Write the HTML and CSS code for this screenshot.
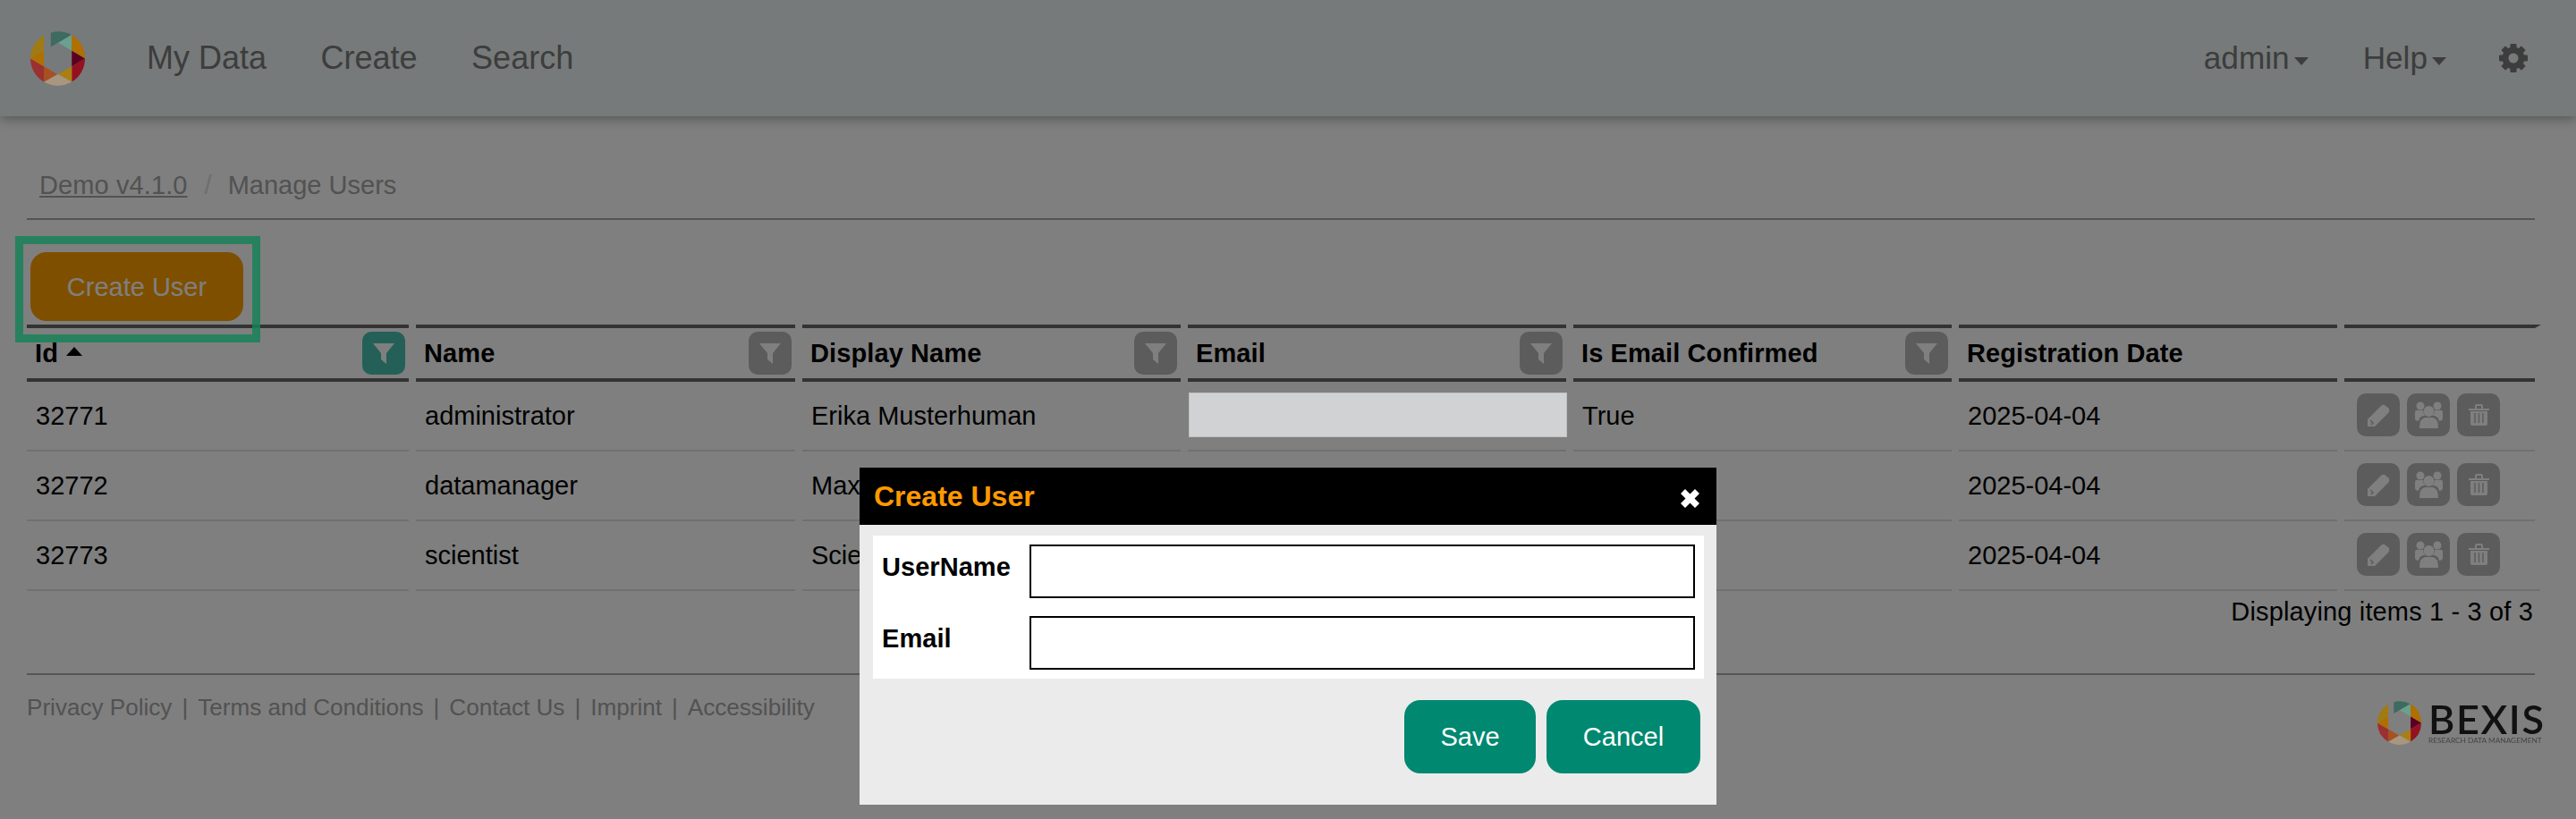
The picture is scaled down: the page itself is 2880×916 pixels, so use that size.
FILE: index.html
```html
<!DOCTYPE html>
<html lang="en">
<head>
<meta charset="utf-8">
<title>Manage Users</title>
<link rel="stylesheet" href="styles.css">
</head>
<body>
<svg class="defs" width="0" height="0" aria-hidden="true">
  <defs>
    <g id="bexis-mark">
      <path fill="#3d6b60" d="M37.4 2.7A50 50 0 0 1 75 6.6L37.4 28.6Z"/>
      <path fill="#6aa08f" d="M75.8 6.6V35.7L51 20.9Z"/>
      <path fill="#b06f00" d="M75.8 6.6A50 50 0 0 1 100 50L75.8 35.7Z"/>
      <path fill="#5a0020" d="M75.8 35.7L100 50L75.8 64.3Z"/>
      <path fill="#951020" d="M100 50A50 50 0 0 1 75.8 92.8V64.3Z"/>
      <path fill="#a98010" d="M75.8 64.3V92.8L51 78.6Z"/>
      <path fill="#a99680" d="M75.8 92.8A50 50 0 0 1 24.7 92.8L51 78.6Z"/>
      <path fill="#a85020" d="M24.7 92.8V64.3L49 78.6Z"/>
      <path fill="#9b3030" d="M0 50L24.7 64.3V92.8A50 50 0 0 1 0 50Z"/>
      <path fill="#b06f00" d="M24.7 35.7V64.3L0 50Z"/>
      <path fill="#a07b14" d="M24.7 7.2V35.7L0 50A50 50 0 0 1 24.7 7.2Z"/>
    </g>
    <path id="i-filter" d="M0 0H24L15 11V23L9 18V11Z"/>
    <g id="i-pencil">
      <path d="M0 25V17L15 2Q17 0 19 1L24 5Q25 8 23 10L8 25Z"/>
      <path class="notch" d="M3 18L6 21L4 23L6 21"/>
    </g>
    <g id="i-group">
      <circle cx="6" cy="5" r="4.5"/>
      <circle cx="25" cy="5" r="4.5"/>
      <path d="M0 12Q0 9 4 10H27Q31 9 31 12V19Q31 22 26 22H5Q0 22 0 19Z"/>
      <circle class="cut" cx="15.5" cy="11" r="6.5"/>
      <path class="cut" d="M4 30V23Q4 17 10 16H21Q27 17 27 23V30Z"/>
      <path d="M5 30Q5 19 11 18H20Q26 19 26 30Z"/>
      <circle cx="15.5" cy="11" r="6"/>
    </g>
    <g id="i-trash">
      <path d="M0 5H7V2Q7 0 9 0H14Q16 0 16 2V5H23V7H0ZM9 2V5H14V2Z"/>
      <path d="M2 8H21V22Q21 24 19 24H4Q2 24 2 22Z"/>
      <path class="notch" d="M7 10V21M11.500 10V21M16 10V21"/>
    </g>
  </defs>
</svg>

<header class="topbar">
  <svg class="logo-top" viewBox="0 0 100 100" aria-label="BEXIS logo"><use href="#bexis-mark"/></svg>
  <nav class="nav-main">
    <a class="nav-link">My Data</a>
    <a class="nav-link">Create</a>
    <a class="nav-link">Search</a>
  </nav>
  <nav class="nav-right">
    <a class="nav-link nav-drop">admin<span class="caret"></span></a>
    <a class="nav-link nav-drop">Help<span class="caret"></span></a>
    <svg class="gear" viewBox="-16 -16 32 32" aria-label="Settings">
      <circle class="gear-ring" r="9"/>
      <rect class="gear-tooth" x="-3.500" y="-16" width="7" height="7" rx="1"/>
      <rect class="gear-tooth" x="-3.500" y="-16" width="7" height="7" rx="1" transform="rotate(45)"/>
      <rect class="gear-tooth" x="-3.500" y="-16" width="7" height="7" rx="1" transform="rotate(90)"/>
      <rect class="gear-tooth" x="-3.500" y="-16" width="7" height="7" rx="1" transform="rotate(135)"/>
      <rect class="gear-tooth" x="-3.500" y="-16" width="7" height="7" rx="1" transform="rotate(180)"/>
      <rect class="gear-tooth" x="-3.500" y="-16" width="7" height="7" rx="1" transform="rotate(225)"/>
      <rect class="gear-tooth" x="-3.500" y="-16" width="7" height="7" rx="1" transform="rotate(270)"/>
      <rect class="gear-tooth" x="-3.500" y="-16" width="7" height="7" rx="1" transform="rotate(315)"/>
    </svg>
  </nav>
</header>

<main class="content">
  <div class="breadcrumb">
    <a class="crumb-link">Demo v4.1.0</a>
    <span class="crumb-sep">/</span>
    <span class="crumb-current">Manage Users</span>
  </div>

  <div class="toolbar">
    <button class="btn-create" type="button">Create User</button>
  </div>

  <div class="grid">
    <div class="th"><span class="th-label">Id<span class="sort-up"></span></span><span class="filter filter-active"><svg class="ic-filter" viewBox="0 0 24 23"><use href="#i-filter"/></svg></span></div>
    <div class="th"><span class="th-label">Name</span><span class="filter"><svg class="ic-filter" viewBox="0 0 24 23"><use href="#i-filter"/></svg></span></div>
    <div class="th"><span class="th-label">Display Name</span><span class="filter"><svg class="ic-filter" viewBox="0 0 24 23"><use href="#i-filter"/></svg></span></div>
    <div class="th"><span class="th-label">Email</span><span class="filter"><svg class="ic-filter" viewBox="0 0 24 23"><use href="#i-filter"/></svg></span></div>
    <div class="th"><span class="th-label">Is Email Confirmed</span><span class="filter"><svg class="ic-filter" viewBox="0 0 24 23"><use href="#i-filter"/></svg></span></div>
    <div class="th"><span class="th-label">Registration Date</span></div>
    <div class="th th-end"></div>

    <div class="td">32771</div>
    <div class="td">administrator</div>
    <div class="td">Erika Musterhuman</div>
    <div class="td"><span class="redacted"></span></div>
    <div class="td">True</div>
    <div class="td">2025-04-04</div>
    <div class="td td-actions">
      <span class="act"><svg class="ic-pencil" viewBox="0 0 25 25"><use href="#i-pencil"/></svg></span>
      <span class="act"><svg class="ic-group" viewBox="0 0 31 30"><use href="#i-group"/></svg></span>
      <span class="act"><svg class="ic-trash" viewBox="0 0 23 24"><use href="#i-trash"/></svg></span>
    </div>

    <div class="td">32772</div>
    <div class="td">datamanager</div>
    <div class="td">Max Musterhuman</div>
    <div class="td"></div>
    <div class="td">True</div>
    <div class="td">2025-04-04</div>
    <div class="td td-actions">
      <span class="act"><svg class="ic-pencil" viewBox="0 0 25 25"><use href="#i-pencil"/></svg></span>
      <span class="act"><svg class="ic-group" viewBox="0 0 31 30"><use href="#i-group"/></svg></span>
      <span class="act"><svg class="ic-trash" viewBox="0 0 23 24"><use href="#i-trash"/></svg></span>
    </div>

    <div class="td">32773</div>
    <div class="td">scientist</div>
    <div class="td">Scientist Musterhuman</div>
    <div class="td"></div>
    <div class="td">True</div>
    <div class="td">2025-04-04</div>
    <div class="td td-actions td-end">
      <span class="act"><svg class="ic-pencil" viewBox="0 0 25 25"><use href="#i-pencil"/></svg></span>
      <span class="act"><svg class="ic-group" viewBox="0 0 31 30"><use href="#i-group"/></svg></span>
      <span class="act"><svg class="ic-trash" viewBox="0 0 23 24"><use href="#i-trash"/></svg></span>
    </div>
  </div>

  <div class="pager">Displaying items 1 - 3 of 3</div>

  <footer class="footer">
    <div class="footer-links">
      <a>Privacy Policy</a><span class="pipe">|</span><a>Terms and Conditions</a><span class="pipe">|</span><a>Contact Us</a><span class="pipe">|</span><a>Imprint</a><span class="pipe">|</span><a>Accessibility</a>
    </div>
    <div class="brand">
      <svg class="brand-mark" viewBox="0 0 100 100" aria-hidden="true"><use href="#bexis-mark"/></svg>
      <div class="brand-text">
        <div class="brand-name">BEXIS</div>
        <div class="brand-tag">RESEARCH DATA MANAGEMENT</div>
      </div>
    </div>
  </footer>
</main>

<div class="overlay"></div>
<div class="highlight"></div>

<div class="modal" role="dialog" aria-label="Create User">
  <div class="modal-title">
    <span>Create User</span>
    <svg class="modal-close" viewBox="0 0 21 21" aria-label="Close"><path d="M5 0L10.500 5.500L16 0L21 5L15.500 10.500L21 16L16 21L10.500 15.500L5 21L0 16L5.500 10.500L0 5Z"/></svg>
  </div>
  <div class="modal-body">
    <div class="form-panel">
      <div class="form-row">
        <label class="form-label">UserName</label>
        <input class="form-input" type="text">
      </div>
      <div class="form-row">
        <label class="form-label">Email</label>
        <input class="form-input" type="text">
      </div>
    </div>
    <div class="modal-actions">
      <button class="btn-modal btn-save" type="button">Save</button>
      <button class="btn-modal btn-cancel" type="button">Cancel</button>
    </div>
  </div>
</div>
</body>
</html>
```
FILE: styles.css
```css
* { box-sizing: border-box; }
html, body { margin: 0; padding: 0; height: 916px; overflow: hidden; }
body {
  font-family: "Liberation Sans", Arial, sans-serif;
  font-size: 29px;
  color: #000;
  background: #fff;
}
.defs { position: absolute; }

/* top bar */
.topbar {
  height: 130px;
  display: flex;
  align-items: center;
  padding: 0 54px 0 34px;
  background: #ecf4f4;
  box-shadow: 0 4px 12px rgba(0, 0, 0, .3);
}
.logo-top { width: 61px; height: 61px; position: relative; z-index: 15; }
.nav-main { display: flex; gap: 60.5px; margin-left: 69px; }
.nav-right { display: flex; align-items: center; margin-left: auto; }
.nav-link { font-size: 36px; line-height: 44px; color: #7a7a7a; }
.nav-drop { display: flex; align-items: center; margin-right: 61px; font-size: 35.2px; }
.nav-drop + .gear { margin-left: -2px; }
.caret {
  width: 0; height: 0;
  margin: 6px 0 0 5px;
  border-left: 8px solid transparent;
  border-right: 8px solid transparent;
  border-top: 9px solid #7a7a7a;
}
.gear { width: 32px; height: 32px; }
.gear-ring { fill: none; stroke: #7a7a7a; stroke-width: 7; }
.gear-tooth { fill: #7a7a7a; }

/* content */
.content { padding: 0 46px 0 30px; }
.breadcrumb {
  height: 116px;
  padding: 60px 0 0 14px;
  line-height: 34px;
  border-bottom: 2px solid #aaa;
  color: #a4a4a4;
}
.crumb-link { color: #a4a4a4; text-decoration: underline; letter-spacing: .1px; }
.crumb-sep { margin: 0 10px 0 11px; color: #ddd; }
.toolbar { padding: 36px 0 4px 4px; }
.btn-create {
  display: block;
  width: 238px;
  height: 77px;
  padding: 2px 0 0;
  border: 0;
  border-radius: 18px;
  background: #ff9e00;
  color: #fff;
  font: inherit;
}

/* table */
.grid {
  display: grid;
  grid-template-columns: 427px 424px 423px 423px 423px 423px 213px;
  column-gap: 8px;
}
.th {
  position: relative;
  height: 64px;
  border-top: 4px solid #666;
  border-bottom: 4px solid #666;
  display: flex;
  align-items: center;
  justify-content: space-between;
  padding: 0 4px 0 9px;
}
.th-end::before {
  content: "";
  position: absolute;
  top: -4px; right: -7px;
  width: 7px; height: 4px;
  background: #666;
  clip-path: polygon(0 0, 100% 0, 0 100%);
}
.th-label { font-weight: 700; display: inline-flex; align-items: center; letter-spacing: .1px; }
.sort-up {
  width: 0; height: 0;
  margin: -4px 0 0 9px;
  border-left: 9px solid transparent;
  border-right: 9px solid transparent;
  border-bottom: 10px solid #000;
}
.filter {
  width: 48px; height: 48px;
  border-radius: 10px;
  background: #b8b8b8;
  display: flex;
  align-items: center;
  justify-content: center;
}
.filter-active { background: #48c0b0; }
.ic-filter { width: 24px; height: 23px; fill: #fff; }
.td {
  position: relative;
  height: 78px;
  padding: 0 10px 0 10px;
  display: flex;
  align-items: center;
  border-bottom: 2px solid #e0e0e0;
}
.td-end::after {
  content: "";
  position: absolute;
  bottom: -2px; right: -6px;
  width: 6px; height: 2px;
  background: #e0e0e0;
}
.redacted {
  position: absolute;
  z-index: 15;
  left: 1px; top: 12px;
  width: 423px; height: 50px;
  background: #d1d2d4;
  border: 1px solid #c0c0c2;
}
.td-actions { gap: 8px; padding: 0 10px 2px 14px; }
.act {
  width: 48px; height: 48px;
  border-radius: 10px;
  background: #b8b8b8;
  display: flex;
  align-items: center;
  justify-content: center;
  fill: #fff;
}
.ic-pencil { width: 25px; height: 25px; }
.ic-group { width: 31px; height: 30px; }
.ic-trash { width: 23px; height: 24px; }
.notch { fill: none; stroke: #b8b8b8; stroke-width: 1.500; }
.cut { fill: #b8b8b8; }

.pager { text-align: right; padding: 6px 2px 0 0; line-height: 34px; letter-spacing: .15px; }

/* footer */
.footer {
  margin-top: 52px;
  border-top: 2px solid #aaa;
  padding-top: 21px;
  display: flex;
  justify-content: space-between;
  align-items: flex-start;
}
.footer-links { font-size: 26.1px; line-height: 30px; color: #a4a4a4; }
.pipe { padding: 0 11px; }
.brand {
  position: relative;
  z-index: 15;
  display: flex;
  gap: 8px;
  margin: 8px -8px 0 0;
}
.brand-mark { width: 49px; height: 49px; }
.brand-text { width: 127px; padding-top: 1px; }
.brand-name {
  font-family: Lato, sans-serif;
  font-size: 45px;
  font-weight: 600;
  line-height: 38px;
  letter-spacing: 1.600px;
  color: #111;
}
.brand-tag {
  font-family: Lato, sans-serif;
  font-size: 8.300px;
  line-height: 8px;
  margin-top: 1px;
  white-space: nowrap;
  color: #444;
}

/* dimming layer, annotation */
.overlay {
  position: fixed;
  inset: 0;
  z-index: 10;
  background: rgba(0, 0, 0, .5);
}
.highlight {
  position: fixed;
  z-index: 20;
  left: 17px; top: 264px;
  width: 274px; height: 119px;
  border: 9px solid rgba(24, 129, 89, .85);
}

/* modal */
.modal {
  position: fixed;
  z-index: 20;
  left: 961px; top: 523px;
  width: 958px; height: 377px;
  background: #ebebeb;
}
.modal-title {
  height: 64px;
  background: #000;
  color: #ff9900;
  font-size: 32px;
  font-weight: 700;
  display: flex;
  align-items: center;
  justify-content: space-between;
  padding: 0 19px 0 16px;
}
.modal-close { width: 21px; height: 21px; fill: #fff; margin-top: 5px; }
.modal-body { padding: 12px 18px 0 15px; }
.form-panel {
  margin-right: -4px;
  height: 160px;
  background: #fff;
  padding: 10px 10px 10px 10px;
  display: flex;
  flex-direction: column;
  gap: 20px;
}
.form-row { display: flex; }
.form-label { width: 165px; flex: none; font-weight: 700; padding-top: 8px; line-height: 34px; letter-spacing: .05px; }
.form-input {
  flex: 1;
  min-width: 0;
  height: 60px;
  border: 2px solid #000;
  background: #fff;
  border-radius: 0;
  padding: 0;
}
.modal-actions { display: flex; justify-content: flex-end; gap: 12px; margin-top: 24px; }
.btn-modal {
  height: 82px;
  border: 0;
  border-radius: 18px;
  background: #008870;
  color: #fff;
  font: inherit;
}
.btn-save { width: 147px; }
.btn-cancel { width: 172px; }
```
